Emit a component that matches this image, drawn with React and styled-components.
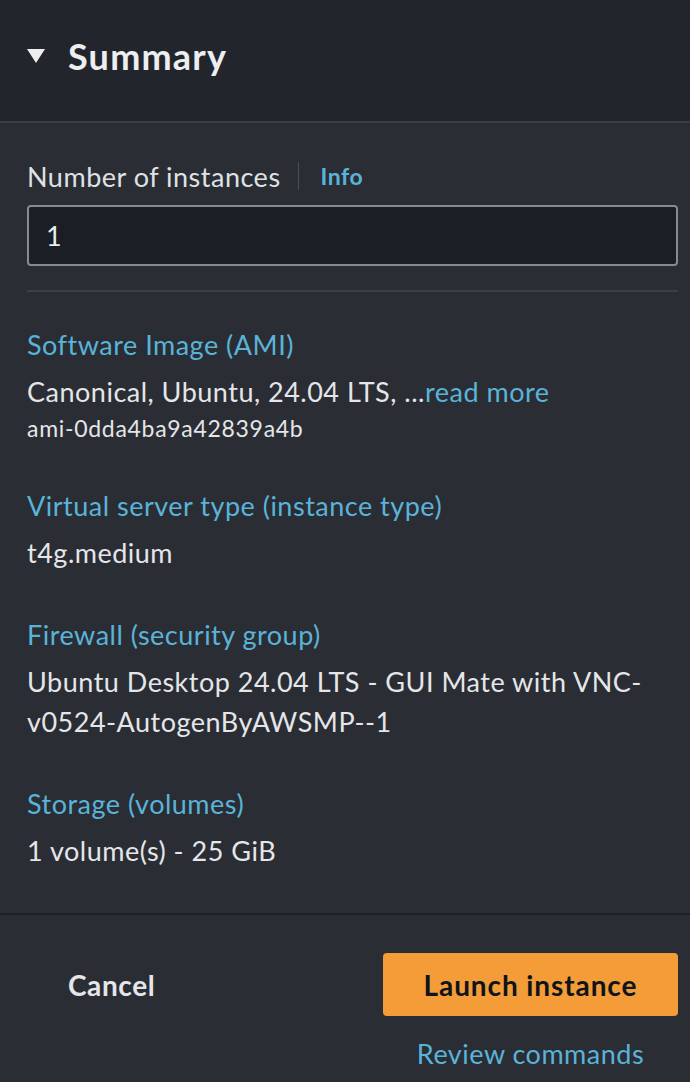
import React from "react";
import styled, { createGlobalStyle } from "styled-components";

const Global = createGlobalStyle`
  html, body { margin: 0; padding: 0; background: #2a2d33; }
  body { font-family: Lato, "Open Sans", sans-serif; -webkit-font-smoothing: antialiased; }
  * { box-sizing: border-box; }
`;

const Panel = styled.div`
  width: 690px;
  min-height: 1082px;
  background: #2a2d33;
  color: #e9ebed;
  display: flex;
  flex-direction: column;
`;

const Header = styled.div`
  height: 123px;
  background: #22252c;
  border-bottom: 2px solid #3b3f47;
  display: flex;
  align-items: center;
  padding: 0 27px 10px;
  gap: 23px;
`;

const Caret = styled.svg`
  width: 18px;
  height: 14px;
  flex: none;
`;

const Title = styled.h2`
  margin: 0;
  font-size: 36px;
  font-weight: 700;
  color: #eceef0;
  letter-spacing: 1.2px;
`;

const Body = styled.div`
  padding: 33px 12px 0 27px;
  display: flex;
  flex-direction: column;
`;

const FieldLabelRow = styled.div`
  display: flex;
  align-items: center;
  height: 40px;
`;

const FieldLabel = styled.span`
  font-size: 27px;
  letter-spacing: 0.5px;
  color: #dfe2e5;
`;

const Divider = styled.span`
  width: 1px;
  height: 28px;
  background: #4a4f57;
  margin: 0 22px 0 17px;
`;

const InfoLink = styled.a`
  font-size: 23px;
  font-weight: 700;
  letter-spacing: 0.5px;
  color: #5ab3d9;
`;

const Input = styled.div`
  margin-top: 9px;
  height: 61px;
  border: 2px solid #858b93;
  border-radius: 4px;
  background: #1b1e25;
  display: flex;
  align-items: center;
  padding: 0 17px;
  font-size: 27px;
  color: #e9ebed;
`;

const Rule = styled.hr`
  margin: 24px 0 33px;
  border: none;
  border-top: 2px solid #3b3f47;
`;

const Items = styled.div`
  display: flex;
  flex-direction: column;
  gap: 42px;
`;

const Item = styled.div`
  display: flex;
  flex-direction: column;
  gap: 7px;
`;

const Key = styled.a`
  font-size: 27px;
  letter-spacing: 0.5px;
  line-height: 40px;
  color: #5ab3d9;
`;

const Value = styled.div`
  font-size: 27px;
  letter-spacing: 0.5px;
  line-height: 40px;
  color: #e4e6e9;
  padding-right: 20px;
`;

const ReadMore = styled.a`
  color: #5ab3d9;
`;

const Sub = styled.div`
  font-size: 23px;
  letter-spacing: 0.7px;
  line-height: 32px;
  color: #e4e6e9;
`;

const Footer = styled.div`
  margin-top: 42px;
  border-top: 2px solid #1d2026;
  padding: 38px 12px 0 27px;
  display: grid;
  grid-template-columns: 1fr 295px;
  row-gap: 18px;
`;

const CancelButton = styled.button`
  background: none;
  border: none;
  justify-self: start;
  padding: 0 0 0 41px;
  font-family: inherit;
  font-size: 28px;
  letter-spacing: 0.6px;
  font-weight: 700;
  color: #e4e6e9;
  height: 63px;
`;

const LaunchButton = styled.button`
  height: 63px;
  border: none;
  border-radius: 4px;
  background: #f39c38;
  font-family: inherit;
  font-size: 28px;
  letter-spacing: 0.9px;
  font-weight: 700;
  color: #0f141a;
`;

const ReviewLink = styled.a`
  grid-column: 2;
  text-align: center;
  font-size: 27px;
  letter-spacing: 0.5px;
  line-height: 40px;
  color: #5ab3d9;
`;

export default function App() {
  return (
    <>
      <Global />
      <Panel>
        <Header>
          <Caret viewBox="0 0 18 14">
            <path d="M0 0 H18 L9 14 Z" fill="#eceef0" />
          </Caret>
          <Title>Summary</Title>
        </Header>
        <Body>
          <FieldLabelRow>
            <FieldLabel>Number of instances</FieldLabel>
            <Divider />
            <InfoLink>Info</InfoLink>
          </FieldLabelRow>
          <Input>1</Input>
          <Rule />
          <Items>
            <Item>
              <Key>Software Image (AMI)</Key>
              <div>
                <Value>
                  Canonical, Ubuntu, 24.04 LTS, ...<ReadMore>read more</ReadMore>
                </Value>
                <Sub>ami-0dda4ba9a42839a4b</Sub>
              </div>
            </Item>
            <Item>
              <Key>Virtual server type (instance type)</Key>
              <Value>t4g.medium</Value>
            </Item>
            <Item>
              <Key>Firewall (security group)</Key>
              <Value>Ubuntu Desktop 24.04 LTS - GUI Mate with VNC-v0524-AutogenByAWSMP--1</Value>
            </Item>
            <Item>
              <Key>Storage (volumes)</Key>
              <Value>1 volume(s) - 25 GiB</Value>
            </Item>
          </Items>
        </Body>
        <Footer>
          <CancelButton>Cancel</CancelButton>
          <LaunchButton>Launch instance</LaunchButton>
          <ReviewLink>Review commands</ReviewLink>
        </Footer>
      </Panel>
    </>
  );
}
